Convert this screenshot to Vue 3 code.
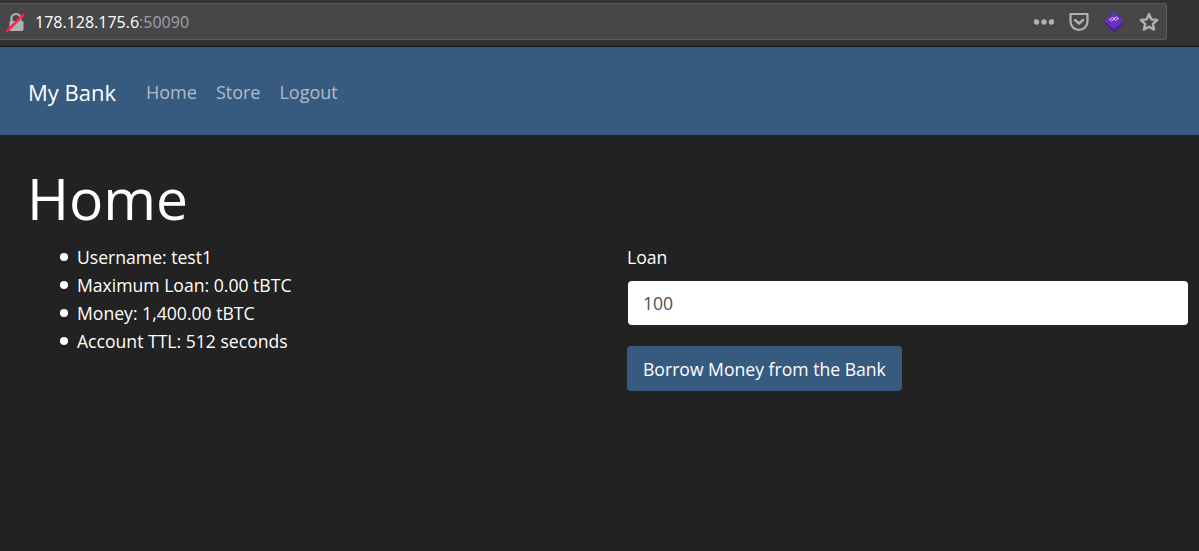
<script setup>
const facts = ['Username: test1', 'Maximum Loan: 0.00 tBTC', 'Money: 1,400.00 tBTC', 'Account TTL: 512 seconds']
const links = ['Home', 'Store', 'Logout']
</script>

<template>
  <div class="page">
    <header class="chrome">
      <div class="urlbar">
        <svg class="lock" width="20" height="20" viewBox="0 0 20 20">
          <path d="M6.500 9V6.500a4.500 4.500 0 0 1 9 0V9" fill="none" stroke="#b1b1b3" stroke-width="2.200" />
          <rect x="4.500" y="9" width="14" height="10" rx="1.500" fill="#b1b1b3" />
          <path d="M1.500 19.500L19 2.500" stroke="#f0284f" stroke-width="2.600" />
        </svg>
        <span class="host">178.128.175.6</span><span class="port">:50090</span>
        <div class="tools">
          <svg width="20" height="8" viewBox="0 0 20 8" fill="#b1b1b3">
            <circle cx="2.500" cy="4" r="2.700" /><circle cx="10" cy="4" r="2.700" /><circle cx="17.500" cy="4" r="2.700" />
          </svg>
          <svg width="20" height="20" viewBox="0 0 20 20" fill="none" stroke="#b1b1b3">
            <path d="M1.500 2h17v7.500a8.500 8.500 0 0 1-17 0z" stroke-width="2.200" stroke-linejoin="round" />
            <path d="M6 8l4 3.500L14 8" stroke-width="2.400" stroke-linecap="round" stroke-linejoin="round" />
          </svg>
          <svg width="20" height="20" viewBox="0 0 20 20">
            <path d="M10 0l9 8.500q1 1 0 2L11 18.500q-1 1-2 0L1 10.500q-1-1 0-2z" fill="#6a2cc4" />
            <path d="M.5 9.500L10 17.500l9.500-8q.5 1-.5 2L11 19.500q-1 1-2 0L1 11.500q-1-1-.5-2z" fill="#45208c" />
            <path d="M5.500 7.500l3-2 2 1.500-3 2zM9.500 6.500l3-1.500 2 1.500-3 2z" fill="none" stroke="#dccff5" stroke-width="1" />
          </svg>
          <svg width="20" height="20" viewBox="0 0 20 20">
            <path d="M10 2l2.400 5.400 5.800.6-4.300 3.900 1.200 5.700L10 14.700l-5.100 2.900 1.200-5.700L1.800 8l5.800-.6z" fill="none" stroke="#b1b1b3" stroke-width="2.400" stroke-linejoin="round" />
          </svg>
        </div>
      </div>
    </header>

    <nav class="navbar">
      <a class="brand">My Bank</a>
      <a v-for="link in links" :key="link" class="link">{{ link }}</a>
    </nav>

    <main class="content">
      <h1>Home</h1>
      <div class="row">
        <ul class="facts">
          <li v-for="fact in facts" :key="fact">{{ fact }}</li>
        </ul>
        <form class="loan" @submit.prevent>
          <label for="loan">Loan</label>
          <input id="loan" value="100" />
          <button type="submit">Borrow Money from the Bank</button>
        </form>
      </div>
    </main>
  </div>
</template>

<style>
html, body { margin: 0; background: #222; }
</style>

<style scoped>
.page {
  height: 551px;
  overflow: hidden;
  background: #222;
  color: #fff;
  font-family: "Open Sans", "Noto Sans", sans-serif;
  font-size: 17.6px;
}
.chrome {
  height: 47px;
  box-sizing: border-box;
  padding: 3px 32px 0 0;
  background: #323234;
  border-bottom: 1px solid #111;
}
.urlbar {
  height: 37px;
  box-sizing: border-box;
  display: flex;
  align-items: center;
  padding: 0 7px 0 5px;
  background: #474749;
  border: 1px solid #5c5c5e;
  border-left: 0;
  border-radius: 0 3px 3px 0;
  font-size: 16px;
}
.lock { margin-right: 10px; }
.host { color: #fff; }
.port { color: #a0a0a2; }
.tools {
  margin-left: auto;
  display: flex;
  align-items: center;
  gap: 15px;
}
.navbar {
  height: 88px;
  box-sizing: border-box;
  display: flex;
  align-items: center;
  padding: 2px 28px 0;
  background: #375a7f;
}
.brand { font-size: 22px; margin-right: 30px; }
.link { color: rgba(255, 255, 255, 0.6); font-size: 18px; margin-right: 19px; }
.content { padding: 28px 10px 0 28px; }
h1 {
  margin: 0 0 10px -1px;
  font-size: 57px;
  font-weight: 400;
  line-height: 70px;
}
.row {
  display: grid;
  grid-template-columns: 599px 1fr;
}
.facts {
  margin: 0;
  padding: 0 0 0 32px;
  list-style: none;
  line-height: 28px;
}
.facts li {
  display: flex;
  align-items: center;
  gap: 9px;
}
.facts li::before {
  content: "";
  width: 8px;
  height: 8px;
  border-radius: 50%;
  background: #fff;
}
.loan {
  display: flex;
  flex-direction: column;
  align-items: flex-start;
}
label { line-height: 28px; margin-bottom: 9px; }
input {
  width: 100%;
  height: 46px;
  box-sizing: border-box;
  padding: 0 15px;
  border: 1px solid transparent;
  background-clip: padding-box;
  border-radius: 5px;
  background-color: #fff;
  color: #495057;
  font: inherit;
  margin-bottom: 20px;
}
button {
  height: 45px;
  padding: 0 16px;
  border: 0;
  border-radius: 4px;
  background: #375a7f;
  color: #fff;
  font: inherit;
}
</style>
